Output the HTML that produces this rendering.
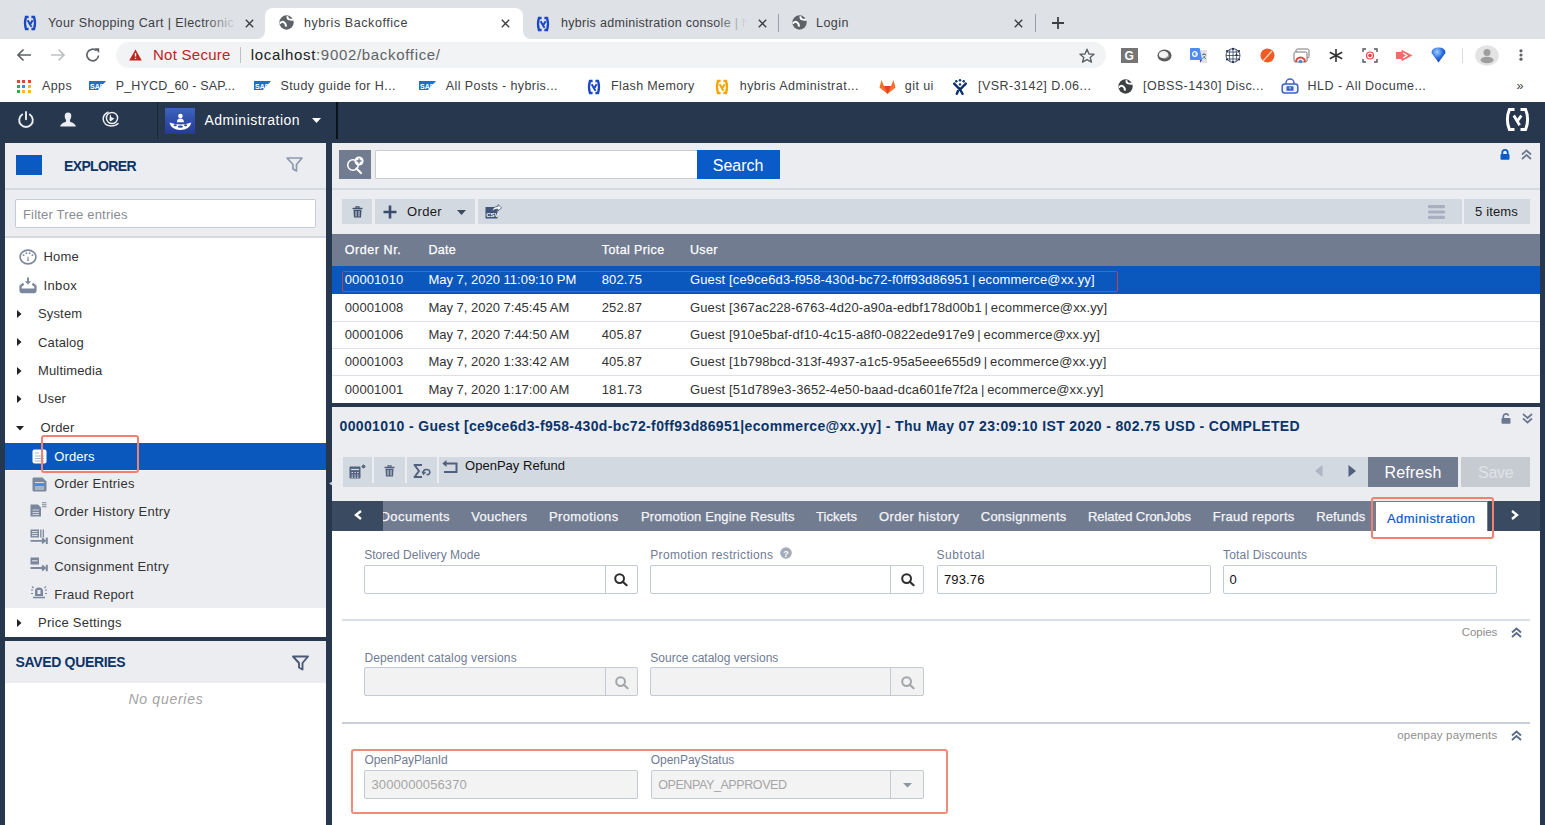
<!DOCTYPE html>
<html><head><meta charset="utf-8">
<style>
*{box-sizing:border-box;margin:0;padding:0}
html,body{width:1545px;height:825px;overflow:hidden;background:#27374d;font-family:"Liberation Sans",sans-serif;position:relative}
.a{position:absolute}
.t{position:absolute;white-space:nowrap;line-height:1;font-family:"Liberation Sans",sans-serif}
svg.a{overflow:visible}
</style></head><body>
<div class="a" style="left:0px;top:0px;width:1545px;height:39px;background:#dee1e6;"></div>
<div class="a" style="left:0px;top:39px;width:1545px;height:63px;background:#ffffff;"></div>
<div class="a" style="left:265px;top:8px;width:258px;height:31px;background:#ffffff;border-radius:8px 8px 0 0;"></div>
<svg class="a" style="left:257px;top:31px;" width="8" height="8" viewBox="0 0 8 8"><path d="M8 0 V8 H0 A8 8 0 0 0 8 0Z" fill="#fff"/></svg>
<svg class="a" style="left:523px;top:31px;" width="8" height="8" viewBox="0 0 8 8"><path d="M0 0 V8 H8 A8 8 0 0 1 0 0Z" fill="#fff"/></svg>
<div class="a" style="left:116px;top:42px;width:990px;height:26px;background:#f1f3f4;border-radius:13px;"></div>
<svg class="a" style="left:23px;top:16px;" width="14" height="14" viewBox="0 0 14 14"><path d="M5.6 1 H2.9 Q1.1 7 2.9 13 H5.6" stroke="#1a47c4" stroke-width="2.3" fill="none"/><path d="M8.4 1 H11.1 Q12.9 7 11.1 13 H8.4" stroke="#1a47c4" stroke-width="2.3" fill="none"/><path d="M4.7 4.3 L7.5 9.2 L8.6 10.8 M9.6 4.3 L7.1 8.4" stroke="#1a47c4" stroke-width="2" fill="none"/></svg>
<span class="t" style="left:48.0px;top:17.00px;font-size:12.50px;color:#3c4043;letter-spacing:0.40px;">Your Shopping Cart | Electronic</span>
<div class="a" style="left:205px;top:10px;width:40px;height:25px;background:linear-gradient(90deg,rgba(222,225,230,0),#dee1e6 80%);"></div>
<svg class="a" style="left:244.5px;top:18.5px;" width="9" height="9" viewBox="0 0 9 9"><path d="M0.8 0.8 L8.2 8.2 M8.2 0.8 L0.8 8.2" stroke="#3c4043" stroke-width="1.4"/></svg>
<svg class="a" style="left:279px;top:15px;" width="15" height="15" viewBox="0 0 15 15"><circle cx="7.5" cy="7.5" r="7.2" fill="#5f6368"/><path d="M0.8 8.6 Q2.8 5.6 5.2 7.4 Q7.6 9.4 6.6 11.6 M8.6 1.2 Q8 3.6 10.2 4.4 Q12.6 5 14.4 4.6" stroke="#fff" stroke-width="1.9" fill="none"/></svg>
<span class="t" style="left:304.0px;top:17.00px;font-size:12.50px;color:#3c4043;letter-spacing:0.57px;">hybris Backoffice</span>
<svg class="a" style="left:501.0px;top:18.5px;" width="9" height="9" viewBox="0 0 9 9"><path d="M0.8 0.8 L8.2 8.2 M8.2 0.8 L0.8 8.2" stroke="#3c4043" stroke-width="1.4"/></svg>
<svg class="a" style="left:536px;top:16.5px;" width="14" height="14" viewBox="0 0 14 14"><path d="M5.6 1 H2.9 Q1.1 7 2.9 13 H5.6" stroke="#1a47c4" stroke-width="2.3" fill="none"/><path d="M8.4 1 H11.1 Q12.9 7 11.1 13 H8.4" stroke="#1a47c4" stroke-width="2.3" fill="none"/><path d="M4.7 4.3 L7.5 9.2 L8.6 10.8 M9.6 4.3 L7.1 8.4" stroke="#1a47c4" stroke-width="2" fill="none"/></svg>
<div class="a" style="left:560px;top:10px;width:190px;height:26px;overflow:hidden"><span class="t" style="left:1.0px;top:7.00px;font-size:12.50px;color:#3c4043;letter-spacing:0.30px;">hybris administration console | hybris</span>
</div>
<div class="a" style="left:715px;top:10px;width:36px;height:26px;background:linear-gradient(90deg,rgba(222,225,230,0) 0,#dee1e6 90%);"></div>
<svg class="a" style="left:757.5px;top:18.5px;" width="9" height="9" viewBox="0 0 9 9"><path d="M0.8 0.8 L8.2 8.2 M8.2 0.8 L0.8 8.2" stroke="#3c4043" stroke-width="1.4"/></svg>
<div class="a" style="left:778px;top:14px;width:1px;height:18px;background:#9aa0a6;"></div>
<svg class="a" style="left:792px;top:15px;" width="15" height="15" viewBox="0 0 15 15"><circle cx="7.5" cy="7.5" r="7.2" fill="#5f6368"/><path d="M0.8 8.6 Q2.8 5.6 5.2 7.4 Q7.6 9.4 6.6 11.6 M8.6 1.2 Q8 3.6 10.2 4.4 Q12.6 5 14.4 4.6" stroke="#fff" stroke-width="1.9" fill="none"/></svg>
<span class="t" style="left:816.0px;top:17.00px;font-size:12.50px;color:#3c4043;letter-spacing:0.48px;">Login</span>
<svg class="a" style="left:1013.5px;top:18.5px;" width="9" height="9" viewBox="0 0 9 9"><path d="M0.8 0.8 L8.2 8.2 M8.2 0.8 L0.8 8.2" stroke="#3c4043" stroke-width="1.4"/></svg>
<div class="a" style="left:1035px;top:14px;width:1px;height:18px;background:#9aa0a6;"></div>
<svg class="a" style="left:1051px;top:16px;" width="14" height="14" viewBox="0 0 14 14"><path d="M7 1 V13 M1 7 H13" stroke="#3c4043" stroke-width="1.8"/></svg>
<svg class="a" style="left:16px;top:47px;" width="16" height="16" viewBox="0 0 16 16"><path d="M15 8 H2 M7.5 2.5 L2 8 L7.5 13.5" stroke="#5f6368" stroke-width="1.7" fill="none"/></svg>
<svg class="a" style="left:50px;top:47px;" width="16" height="16" viewBox="0 0 16 16"><path d="M1 8 H14 M8.5 2.5 L14 8 L8.5 13.5" stroke="#bdc1c6" stroke-width="1.7" fill="none"/></svg>
<svg class="a" style="left:85px;top:47px;" width="16" height="16" viewBox="0 0 16 16"><path d="M13.5 8.5 A5.8 5.8 0 1 1 11.5 3.6" stroke="#5f6368" stroke-width="1.7" fill="none"/><path d="M9.5 1.2 L14.2 1.2 L14.2 6 Z" fill="#5f6368"/></svg>
<svg class="a" style="left:129px;top:49px;" width="13" height="12" viewBox="0 0 13 12"><path d="M6.5 0.5 L12.8 11.5 H0.2 Z" fill="#c5221f"/><path d="M6.5 4 V7.6 M6.5 8.8 V10" stroke="#fff" stroke-width="1.4"/></svg>
<span class="t" style="left:153.0px;top:47.00px;font-size:15.00px;color:#c5221f;letter-spacing:0.27px;">Not Secure</span>
<div class="a" style="left:240px;top:47px;width:1px;height:16px;background:#bdc1c6;"></div>
<span class="t" style="left:250.7px;top:47.25px;font-size:15px;letter-spacing:0.68px;color:#202124">localhost<span style="color:#5f6368">:9002/backoffice/</span></span>
<svg class="a" style="left:1079px;top:48px;" width="16" height="15" viewBox="0 0 16 15"><path d="M8 1.2 L10 6 L15 6.3 L11.2 9.5 L12.5 14.2 L8 11.6 L3.5 14.2 L4.8 9.5 L1 6.3 L6 6 Z" stroke="#5f6368" stroke-width="1.4" fill="none" stroke-linejoin="round"/></svg>
<div class="a" style="left:1121px;top:48px;width:17px;height:15px;background:#757575;"></div>
<span class="t" style="left:1124.5px;top:50.00px;font-size:12.00px;color:#fff;font-weight:bold;">G</span>
<svg class="a" style="left:1156.5px;top:48.5px;" width="15" height="13" viewBox="0 0 15 13"><ellipse cx="7.5" cy="6.5" rx="7" ry="6" fill="#5a5a5a"/><ellipse cx="6.6" cy="5.7" rx="4.8" ry="3.6" fill="#f4f4f4"/><path d="M11 3.5 Q12.5 8.5 6 9.6 Q11 10.5 12.6 6.8Z" fill="#9a9a9a"/></svg>
<div class="a" style="left:1199.8px;top:50.4px;width:7.2px;height:12.3px;background:#e2e2e2;"></div>
<svg class="a" style="left:1189.8px;top:47.8px;" width="18" height="15" viewBox="0 0 18 15"><path d="M0.8 0 H9.6 L12.2 12 H0.8 Q0 12 0 11.2 V0.8 Q0 0 0.8 0Z" fill="#4c8bf5"/><path d="M9.8 12 L12.2 12 L10 14.6Z" fill="#3a3fb0"/><circle cx="4.9" cy="6" r="2.3" stroke="#fff" stroke-width="1.2" fill="none"/><path d="M5 6 H7.3" stroke="#fff" stroke-width="1"/><path d="M12 6.5 L16 6.5 M14 5 V7 M12.5 11 L15.5 7.5 M13.5 8.5 L16 11" stroke="#5a7a8a" stroke-width="0.9"/></svg>
<svg class="a" style="left:1225px;top:47.8px;" width="16" height="15" viewBox="0 0 16 15"><ellipse cx="8" cy="7.5" rx="7" ry="6.8" stroke="#1b2a4e" stroke-width="0.8" fill="none"/><path d="M1 7.5 H15 M8 0.7 V14.3 M2 4 H14 M2 11 H14 M5 1.3 Q3.5 7.5 5 13.7 M11 1.3 Q12.5 7.5 11 13.7" stroke="#1b2a4e" stroke-width="0.7" fill="none"/><circle cx="8" cy="0.9" r="1.1" fill="#1b2a4e"/><circle cx="8" cy="14.1" r="1.1" fill="#1b2a4e"/><circle cx="2" cy="3" r="1.1" fill="#1b2a4e"/><circle cx="14" cy="3" r="1.1" fill="#1b2a4e"/><circle cx="2" cy="11.5" r="1.1" fill="#1b2a4e"/><circle cx="14" cy="11.5" r="1.1" fill="#1b2a4e"/><circle cx="11.5" cy="7" r="1.1" fill="#1b2a4e"/></svg>
<svg class="a" style="left:1260px;top:48px;" width="15" height="15" viewBox="0 0 15 15"><circle cx="7.5" cy="7.5" r="7" fill="#ef5b25"/><path d="M3 13 L12 3" stroke="#fcd0b5" stroke-width="1.3"/></svg>
<svg class="a" style="left:1293px;top:48px;" width="17" height="15" viewBox="0 0 17 15"><rect x="3" y="1" width="13" height="9" rx="1.5" stroke="#777" fill="#fff"/><rect x="1" y="4" width="13" height="10" rx="1.5" stroke="#777" fill="#fff"/><path d="M3 14 A4.5 4.5 0 0 1 12 14" stroke="#e94235" stroke-width="2" fill="none"/><circle cx="7.5" cy="13.5" r="1.8" fill="#4285f4"/></svg>
<svg class="a" style="left:1329px;top:49px;" width="14" height="13" viewBox="0 0 14 13"><path d="M7 0 V13 M0.8 3.3 L13.2 9.7 M13.2 3.3 L0.8 9.7" stroke="#333" stroke-width="1.6"/></svg>
<svg class="a" style="left:1362px;top:48px;" width="16" height="15" viewBox="0 0 16 15"><path d="M1 4 V1 H4 M12 1 H15 V4 M15 11 V14 H12 M4 14 H1 V11" stroke="#555" stroke-width="1.4" fill="none"/><circle cx="8" cy="7.5" r="3.5" stroke="#e94235" stroke-width="1.2" fill="none"/><circle cx="8" cy="7.5" r="1.8" fill="#e94235"/></svg>
<svg class="a" style="left:1396px;top:49px;" width="17" height="13" viewBox="0 0 17 13"><path d="M0 3 H5 L6 1 L16.5 6.5 L6 12 L5 10 H0 Z" fill="#f26b6b"/><path d="M7 4 L11 6.5 L7 9" stroke="#fff" stroke-width="1.2" fill="none"/></svg>
<svg class="a" style="left:1431px;top:47px;" width="15" height="16" viewBox="0 0 15 16"><defs><radialGradient id="gm" cx="0.4" cy="0.3" r="0.8"><stop offset="0" stop-color="#9fd3ff"/><stop offset="0.5" stop-color="#2c6de0"/><stop offset="1" stop-color="#0b2fa0"/></radialGradient></defs><path d="M7.5 15.5 L0.5 6 Q0.5 0.5 7.5 0.5 Q14.5 0.5 14.5 6 Z" fill="url(#gm)"/></svg>
<div class="a" style="left:1462px;top:48px;width:1px;height:15px;background:#dadce0;"></div>
<svg class="a" style="left:1475px;top:45px;" width="24" height="21" viewBox="0 0 24 21"><ellipse cx="12" cy="10.5" rx="11.8" ry="10.3" fill="#e3e3e3"/><circle cx="12" cy="7.5" r="3.5" fill="#9e9e9e"/><ellipse cx="12" cy="15" rx="6.5" ry="3.2" fill="#9e9e9e"/></svg>
<svg class="a" style="left:1519px;top:49px;" width="4" height="12" viewBox="0 0 4 12"><circle cx="2" cy="1.8" r="1.6" fill="#5f6368"/><circle cx="2" cy="6" r="1.6" fill="#5f6368"/><circle cx="2" cy="10.2" r="1.6" fill="#5f6368"/></svg>
<svg class="a" style="left:17px;top:80px;" width="15" height="13" viewBox="0 0 15 13"><rect x="0" y="0" width="3" height="3" fill="#ea4335"/><rect x="5" y="0" width="3" height="3" fill="#ea4335"/><rect x="11" y="0" width="3" height="3" fill="#ea4335"/><rect x="0" y="5" width="3" height="3" fill="#34a853"/><rect x="5" y="5" width="3" height="3" fill="#4285f4"/><rect x="11" y="5" width="3" height="3" fill="#fbbc04"/><rect x="0" y="10" width="3" height="3" fill="#34a853"/><rect x="5" y="10" width="3" height="3" fill="#fbbc04"/><rect x="11" y="10" width="3" height="3" fill="#fbbc04"/></svg>
<span class="t" style="left:42.0px;top:80.00px;font-size:12.50px;color:#3c4043;letter-spacing:0.38px;">Apps</span>
<svg class="a" style="left:89px;top:81px;" width="17" height="9" viewBox="0 0 17 9"><path d="M0 0 H17 L9 9 H0 Z" fill="#1a73c8"/><text x="1" y="7.5" font-size="7" font-weight="bold" fill="#fff" font-family="Liberation Sans">SAP</text></svg>
<span class="t" style="left:115.7px;top:80.00px;font-size:12.50px;color:#3c4043;letter-spacing:0.16px;">P_HYCD_60 - SAP...</span>
<svg class="a" style="left:254px;top:81px;" width="17" height="9" viewBox="0 0 17 9"><path d="M0 0 H17 L9 9 H0 Z" fill="#1a73c8"/><text x="1" y="7.5" font-size="7" font-weight="bold" fill="#fff" font-family="Liberation Sans">SAP</text></svg>
<span class="t" style="left:280.4px;top:80.00px;font-size:12.50px;color:#3c4043;letter-spacing:0.43px;">Study guide for H...</span>
<svg class="a" style="left:419px;top:81px;" width="17" height="9" viewBox="0 0 17 9"><path d="M0 0 H17 L9 9 H0 Z" fill="#1a73c8"/><text x="1" y="7.5" font-size="7" font-weight="bold" fill="#fff" font-family="Liberation Sans">SAP</text></svg>
<span class="t" style="left:445.8px;top:80.00px;font-size:12.50px;color:#3c4043;letter-spacing:0.41px;">All Posts - hybris...</span>
<svg class="a" style="left:587px;top:80px;" width="14" height="14" viewBox="0 0 14 14"><path d="M5.6 1 H2.9 Q1.1 7 2.9 13 H5.6" stroke="#1a47c4" stroke-width="2.3" fill="none"/><path d="M8.4 1 H11.1 Q12.9 7 11.1 13 H8.4" stroke="#1a47c4" stroke-width="2.3" fill="none"/><path d="M4.7 4.3 L7.5 9.2 L8.6 10.8 M9.6 4.3 L7.1 8.4" stroke="#1a47c4" stroke-width="2" fill="none"/></svg>
<span class="t" style="left:611.0px;top:80.00px;font-size:12.50px;color:#3c4043;letter-spacing:0.38px;">Flash Memory</span>
<svg class="a" style="left:715px;top:80px;" width="14" height="14" viewBox="0 0 14 14"><path d="M5.6 1 H2.9 Q1.1 7 2.9 13 H5.6" stroke="#f5a400" stroke-width="2.3" fill="none"/><path d="M8.4 1 H11.1 Q12.9 7 11.1 13 H8.4" stroke="#f5a400" stroke-width="2.3" fill="none"/><path d="M4.7 4.3 L7.5 9.2 L8.6 10.8 M9.6 4.3 L7.1 8.4" stroke="#f5a400" stroke-width="2" fill="none"/></svg>
<span class="t" style="left:739.7px;top:80.00px;font-size:12.50px;color:#3c4043;letter-spacing:0.49px;">hybris Administrat...</span>
<svg class="a" style="left:879px;top:79px;" width="17" height="15" viewBox="0 0 17 15"><path d="M8.5 15 L0.5 8.5 L2.5 1 L5 7 H12 L14.5 1 L16.5 8.5 Z" fill="#fc6d26"/><path d="M8.5 15 L5 7 H12 Z" fill="#e24329"/></svg>
<span class="t" style="left:904.8px;top:80.00px;font-size:12.50px;color:#3c4043;letter-spacing:0.43px;">git ui</span>
<svg class="a" style="left:953px;top:78.5px;" width="14" height="16" viewBox="0 0 14 16"><circle cx="3.3" cy="2.3" r="1.2" fill="#0a2f6b"/><circle cx="7" cy="1.3" r="1.2" fill="#0a2f6b"/><circle cx="10.7" cy="2.3" r="1.2" fill="#0a2f6b"/><circle cx="7" cy="5.4" r="1.2" fill="#0a2f6b"/><path d="M1.2 4.6 L7 10.6 L12.8 4.6" stroke="#0a2f6b" stroke-width="2.4" fill="none" stroke-linecap="round"/><path d="M6.4 9.5 L9.6 14.8 M5 12 L3.8 14.8" stroke="#0a2f6b" stroke-width="2.4" stroke-linecap="round"/></svg>
<span class="t" style="left:978.0px;top:80.00px;font-size:12.50px;color:#3c4043;letter-spacing:0.47px;">[VSR-3142] D.06...</span>
<svg class="a" style="left:1118px;top:79px;" width="15" height="15" viewBox="0 0 15 15"><circle cx="7.5" cy="7.5" r="7.2" fill="#3c4043"/><path d="M0.8 8.6 Q2.8 5.6 5.2 7.4 Q7.6 9.4 6.6 11.6 M8.6 1.2 Q8 3.6 10.2 4.4 Q12.6 5 14.4 4.6" stroke="#fff" stroke-width="1.9" fill="none"/></svg>
<span class="t" style="left:1143.0px;top:80.00px;font-size:12.50px;color:#3c4043;letter-spacing:0.48px;">[OBSS-1430] Disc...</span>
<svg class="a" style="left:1281px;top:78px;" width="18" height="16" viewBox="0 0 18 16"><path d="M5 6 V5 A4 4 0 0 1 13 5 V6" stroke="#3b62c9" stroke-width="1.5" fill="none"/><rect x="1.2" y="6" width="15.6" height="9" rx="2.5" stroke="#3b62c9" stroke-width="1.5" fill="#eef2fb"/><rect x="5.5" y="8.2" width="7" height="4.6" rx="0.6" fill="#3b62c9"/><path d="M8 9.6 H10 L9 11.2Z" fill="#fff"/></svg>
<span class="t" style="left:1307.6px;top:80.00px;font-size:12.50px;color:#3c4043;letter-spacing:0.47px;">HLD - All Docume...</span>
<span class="t" style="left:1516.6px;top:80.00px;font-size:12.50px;color:#3c4043;">»</span>
<div class="a" style="left:0px;top:102px;width:1545px;height:41px;background:#27374d;"></div>
<svg class="a" style="left:17px;top:111px;" width="18" height="17" viewBox="0 0 18 17"><path d="M5.2 3.5 A6.8 6.8 0 1 0 12.8 3.5" stroke="#ebedf0" stroke-width="1.9" fill="none" stroke-linecap="round"/><path d="M9 1 V8.2" stroke="#ebedf0" stroke-width="1.9" stroke-linecap="round"/></svg>
<svg class="a" style="left:60px;top:112px;" width="16" height="15" viewBox="0 0 16 15"><path d="M8 0.5 Q11.5 0.5 11.3 4 Q11.2 6.5 10 8 Q9.5 9.2 10.5 10 Q15.5 11.5 15.8 14.5 H0.2 Q0.5 11.5 5.5 10 Q6.5 9.2 6 8 Q4.6 6.5 4.7 4 Q4.7 0.5 8 0.5Z" fill="#ebedf0"/></svg>
<svg class="a" style="left:102px;top:111px;" width="18" height="16" viewBox="0 0 18 16"><path d="M6 1.2 Q0.8 3.5 1.2 8.5 Q2 14.5 9 15 Q13.5 15 16 12.5" stroke="#ebedf0" stroke-width="1.5" fill="none" stroke-linecap="round"/><circle cx="10" cy="7" r="5.6" stroke="#ebedf0" stroke-width="1.5" fill="none"/><path d="M8 3.5 Q10 4.5 9 6 L12.5 7.5 L8.5 10.5 Q7 9 7.5 7.5Z" fill="#ebedf0"/></svg>
<div class="a" style="left:157px;top:102px;width:1px;height:37px;background:#1b2636;"></div>
<div class="a" style="left:165px;top:108px;width:30px;height:26px;background:linear-gradient(180deg,#3b64bb,#26399a);"></div>
<svg class="a" style="left:165px;top:108px;" width="30" height="26" viewBox="0 0 30 26"><circle cx="15.4" cy="8" r="2.3" fill="#fff"/><path d="M11.9 14.3 Q11.9 10.6 15.4 10.6 Q18.9 10.6 18.9 14.3Z" fill="#fff"/><path d="M4.4 14.6 Q15.4 18.6 26.4 14.6 Q24.5 22 15.4 22 Q6.3 22 4.4 14.6Z" fill="#fff"/><ellipse cx="10.2" cy="17.2" rx="1.6" ry="1" fill="#2d47a6"/><ellipse cx="15.4" cy="18.7" rx="2.6" ry="1.1" fill="#2d47a6"/><ellipse cx="20.6" cy="17.2" rx="1.6" ry="1" fill="#2d47a6"/></svg>
<span class="t" style="left:204.5px;top:113.00px;font-size:14.00px;color:#ffffff;letter-spacing:0.49px;">Administration</span>
<svg class="a" style="left:312px;top:118px;" width="9" height="5" viewBox="0 0 9 5"><path d="M0 0 H9 L4.5 5Z" fill="#fff"/></svg>
<div class="a" style="left:336px;top:102px;width:1.5px;height:37px;background:#0c121b;"></div>
<svg class="a" style="left:1505px;top:108px;" width="25" height="23" viewBox="0 0 25 23"><path d="M9.5 1.6 H4.4 Q2.4 6 2.4 11.5 Q2.4 17 4.4 21.4 H9.5" stroke="#fff" stroke-width="3" fill="none"/><path d="M15.5 1.6 H20.6 Q22.6 6 22.6 11.5 Q22.6 17 20.6 21.4 H15.5" stroke="#fff" stroke-width="3" fill="none"/><path d="M8.8 7.6 L13.2 14.8 L14.6 17.2" stroke="#fff" stroke-width="2.8" fill="none"/><path d="M16.4 7.6 L12.2 13.2" stroke="#fff" stroke-width="2.8" fill="none"/></svg>
<div class="a" style="left:5px;top:143px;width:321px;height:682px;background:#ffffff;"></div>
<div class="a" style="left:5px;top:143px;width:321px;height:46px;background:#ebedf0;"></div>
<div class="a" style="left:5px;top:188px;width:321px;height:2px;background:#d5dae1;"></div>
<div class="a" style="left:5px;top:190px;width:321px;height:47px;background:#ebedf0;"></div>
<div class="a" style="left:5px;top:236px;width:321px;height:2px;background:#d5dae1;"></div>
<div class="a" style="left:16px;top:155px;width:26px;height:20px;background:#0a5ac4;"></div>
<span class="t" style="left:64.0px;top:159.00px;font-size:14.00px;color:#0b3468;letter-spacing:-0.63px;font-weight:bold;">EXPLORER</span>
<svg class="a" style="left:286px;top:157px;" width="17" height="15" viewBox="0 0 17 15"><path d="M1 1 H16 L10.5 7.5 V14 L7 12 V7.5 Z" stroke="#8d99ad" stroke-width="1.7" fill="none" stroke-linejoin="round"/></svg>
<div class="a" style="left:15px;top:199px;width:301px;height:29px;background:#ffffff;border:1px solid #c5ccd6;border-radius:2px;"></div>
<span class="t" style="left:23.0px;top:208.00px;font-size:13.00px;color:#888d93;letter-spacing:0.18px;">Filter Tree entries</span>
<svg class="a" style="left:19px;top:249px;" width="18" height="16" viewBox="0 0 18 16"><ellipse cx="9" cy="8" rx="7.9" ry="6.9" stroke="#7b879c" stroke-width="1.6" fill="none"/><path d="M8.2 12 L8.6 7.5 H9.4 L9.8 12Z" fill="#7b879c"/><circle cx="4.6" cy="6.2" r="0.9" fill="#7b879c"/><circle cx="7.4" cy="4.2" r="0.9" fill="#7b879c"/><circle cx="10.6" cy="4.2" r="0.9" fill="#7b879c"/><circle cx="13.4" cy="6.2" r="0.9" fill="#7b879c"/></svg>
<span class="t" style="left:43.6px;top:250.00px;font-size:13.00px;color:#333333;letter-spacing:0.13px;">Home</span>
<svg class="a" style="left:19px;top:277px;" width="18" height="16" viewBox="0 0 18 16"><path d="M9 0.5 V5" stroke="#7b879c" stroke-width="1.9"/><path d="M5.8 4.2 L9 7.4 L12.2 4.2Z" fill="#7b879c"/><path d="M4.6 6.6 L1.6 9.2 V13.2 Q1.6 15 3.4 15 H14.6 Q16.4 15 16.4 13.2 V9.2 L13.4 6.6" stroke="#7b879c" stroke-width="2.4" fill="none" stroke-linejoin="round"/><rect x="1.6" y="11.5" width="14.8" height="3.5" fill="#7b879c"/></svg>
<span class="t" style="left:43.6px;top:279.00px;font-size:13.00px;color:#333333;letter-spacing:0.34px;">Inbox</span>
<svg class="a" style="left:16.5px;top:309.5px;" width="5" height="8" viewBox="0 0 5 8"><path d="M0 0 L4.5 4 L0 8Z" fill="#222"/></svg>
<span class="t" style="left:38.0px;top:307.00px;font-size:13.00px;color:#333333;letter-spacing:0.15px;">System</span>
<svg class="a" style="left:16.5px;top:338.1px;" width="5" height="8" viewBox="0 0 5 8"><path d="M0 0 L4.5 4 L0 8Z" fill="#222"/></svg>
<span class="t" style="left:38.0px;top:336.00px;font-size:13.00px;color:#333333;letter-spacing:0.15px;">Catalog</span>
<svg class="a" style="left:16.5px;top:366.5px;" width="5" height="8" viewBox="0 0 5 8"><path d="M0 0 L4.5 4 L0 8Z" fill="#222"/></svg>
<span class="t" style="left:38.0px;top:364.00px;font-size:13.00px;color:#333333;letter-spacing:0.15px;">Multimedia</span>
<svg class="a" style="left:16.5px;top:394.8px;" width="5" height="8" viewBox="0 0 5 8"><path d="M0 0 L4.5 4 L0 8Z" fill="#222"/></svg>
<span class="t" style="left:38.0px;top:392.00px;font-size:13.00px;color:#333333;letter-spacing:0.15px;">User</span>
<svg class="a" style="left:16px;top:426px;" width="8" height="5" viewBox="0 0 8 5"><path d="M0 0 H8 L4 4.5Z" fill="#222"/></svg>
<span class="t" style="left:40.5px;top:421.00px;font-size:13.00px;color:#333333;letter-spacing:0.15px;">Order</span>
<div class="a" style="left:5px;top:443px;width:321px;height:27px;background:#0a58bd;"></div>
<svg class="a" style="left:32px;top:449px;" width="15" height="15" viewBox="0 0 15 15"><rect x="0.5" y="0.5" width="14" height="14" rx="2" fill="#fff"/><path d="M3 4 H7 M3 7 H12 M3 9.5 H12 M3 12 H12" stroke="#a8b7cf" stroke-width="1.2"/></svg>
<span class="t" style="left:54.2px;top:450.00px;font-size:13.00px;color:#ffffff;letter-spacing:0.13px;">Orders</span>
<div class="a" style="left:5px;top:470px;width:321px;height:138px;background:#ebedf0;"></div>
<div class="a" style="left:5px;top:470px;width:321px;height:1px;background:#f4f5f7;"></div>
<svg class="a" style="left:328.5px;top:481px;" width="4" height="5" viewBox="0 0 4 5"><path d="M4 0 V5 L0 2.5Z" fill="#c9ccd1"/></svg>
<div class="a" style="left:41px;top:435px;width:98px;height:38px;border:2px solid #f2806f;border-radius:3px;"></div>
<svg class="a" style="left:32px;top:477px;" width="15" height="15" viewBox="0 0 15 15"><path d="M1.5 0.5 H10.5 L14.5 4.5 V13 Q14.5 14.5 13 14.5 H2 Q0.5 14.5 0.5 13 V2 Q0.5 0.5 1.5 0.5Z" fill="#7b879c"/><path d="M3 5.5 H12 M3 10 H12 M3 12 H12" stroke="#d9dee6" stroke-width="1"/><rect x="2.5" y="7" width="10" height="1.8" fill="#3a8ef0"/></svg>
<span class="t" style="left:54.2px;top:477.00px;font-size:13.00px;color:#333333;letter-spacing:0.25px;">Order Entries</span>
<svg class="a" style="left:30px;top:502px;" width="17" height="15" viewBox="0 0 17 15"><path d="M0.5 2.5 H8 L11 5.5 V14.5 H0.5Z" fill="#7b879c"/><path d="M2.5 8 H9 M2.5 10.5 H9 M2.5 12.5 H9" stroke="#d9dee6" stroke-width="0.9"/><path d="M12 0.8 H16.5 M12 2.8 H16.5 M12 4.8 H16.5" stroke="#7b879c" stroke-width="1.1"/></svg>
<span class="t" style="left:54.2px;top:505.00px;font-size:13.00px;color:#333333;letter-spacing:0.25px;">Order History Entry</span>
<svg class="a" style="left:30px;top:529px;" width="18" height="16" viewBox="0 0 18 16"><rect x="0.5" y="0.5" width="8.5" height="8" fill="#7b879c"/><path d="M2 2.6 H7.5 M2 4.6 H7.5 M2 6.6 H7.5" stroke="#ebedf0" stroke-width="0.9"/><path d="M10.8 0.5 V8.5 M13.3 0.5 V8.5" stroke="#7b879c" stroke-width="1.3"/><path d="M0.5 11.8 H15 M12 9.3 L15 11.8 L12 14.3" stroke="#7b879c" stroke-width="1.8" fill="none"/><path d="M16.8 8.6 V15" stroke="#7b879c" stroke-width="2"/></svg>
<span class="t" style="left:54.2px;top:533.00px;font-size:13.00px;color:#333333;letter-spacing:0.25px;">Consignment</span>
<svg class="a" style="left:30px;top:557px;" width="18" height="15" viewBox="0 0 18 15"><rect x="0.5" y="0.5" width="8.5" height="7" fill="#7b879c"/><path d="M2 3.8 H7.5" stroke="#ebedf0" stroke-width="1"/><path d="M0.5 11 H15 M12 8.5 L15 11 L12 13.5" stroke="#7b879c" stroke-width="1.8" fill="none"/><path d="M16.8 7.8 V14.2" stroke="#7b879c" stroke-width="2"/></svg>
<span class="t" style="left:54.2px;top:560.00px;font-size:13.00px;color:#333333;letter-spacing:0.25px;">Consignment Entry</span>
<svg class="a" style="left:30px;top:585px;" width="18" height="14" viewBox="0 0 18 14"><path d="M5 11 V6 Q5 2.5 9 2.5 Q13 2.5 13 6 V11Z" fill="#7b879c"/><rect x="7.5" y="5" width="3" height="4" fill="#ebedf0"/><path d="M3 12.5 H15" stroke="#7b879c" stroke-width="1.5"/><path d="M1 5 H3 M15 5 H17 M2 1.5 L3.5 3 M16 1.5 L14.5 3 M1 8.5 H3 M15 8.5 H17" stroke="#7b879c" stroke-width="1.1"/></svg>
<span class="t" style="left:54.2px;top:588.00px;font-size:13.00px;color:#333333;letter-spacing:0.25px;">Fraud Report</span>
<svg class="a" style="left:16.5px;top:618.5px;" width="5" height="8" viewBox="0 0 5 8"><path d="M0 0 L4.5 4 L0 8Z" fill="#222"/></svg>
<span class="t" style="left:38.0px;top:616.00px;font-size:13.00px;color:#333333;letter-spacing:0.25px;">Price Settings</span>
<div class="a" style="left:5px;top:637px;width:321px;height:4px;background:#27374d;"></div>
<svg class="a" style="left:161px;top:641px;" width="8" height="4" viewBox="0 0 8 4"><path d="M0 0 H8 L4 4Z" fill="#b0b8c4"/></svg>
<div class="a" style="left:5px;top:641px;width:321px;height:42px;background:#ebedf0;"></div>
<span class="t" style="left:15.4px;top:655.00px;font-size:14.00px;color:#0b3468;letter-spacing:-0.32px;font-weight:bold;">SAVED QUERIES</span>
<svg class="a" style="left:292px;top:655px;" width="17" height="16" viewBox="0 0 17 15"><path d="M1 1 H16 L10.5 7.5 V14 L7 12 V7.5 Z" stroke="#4a5a78" stroke-width="1.9" fill="none" stroke-linejoin="round"/></svg>
<span class="t" style="left:128.4px;top:692.00px;font-size:14.00px;color:#a3a3a3;letter-spacing:0.73px;font-style:italic;">No queries</span>
<div class="a" style="left:332px;top:143px;width:1208px;height:264px;background:#ebedf0;"></div>
<div class="a" style="left:339px;top:150px;width:32px;height:29px;background:#717c91;"></div>
<svg class="a" style="left:345px;top:155px;" width="22" height="20" viewBox="0 0 22 20"><circle cx="8" cy="10" r="5.3" stroke="#fff" stroke-width="1.6" fill="none"/><path d="M11.5 13.5 L16 18" stroke="#fff" stroke-width="2.2" stroke-linecap="round"/><circle cx="14" cy="6" r="4.6" fill="#fff"/><path d="M14 3.5 V8.5 M11.5 6 H16.5" stroke="#717c91" stroke-width="1.4"/></svg>
<div class="a" style="left:375px;top:150px;width:322px;height:29px;background:#ffffff;border:1px solid #c8ced8;border-right:none;border-radius:2px 0 0 2px;"></div>
<div class="a" style="left:696.6px;top:150px;width:83.4px;height:29px;background:#0a5ac8;"></div>
<span class="t" style="left:712.7px;top:158.00px;font-size:16.00px;color:#ffffff;letter-spacing:0.02px;">Search</span>
<div class="a" style="left:332px;top:188px;width:1208px;height:2px;background:#d5dae1;"></div>
<svg class="a" style="left:1500px;top:149px;" width="10" height="11" viewBox="0 0 10 11"><path d="M2.3 5 V3.6 A2.7 2.7 0 0 1 7.7 3.6 V5" stroke="#0a5ac8" stroke-width="1.8" fill="none"/><rect x="0.5" y="5" width="9" height="5.8" rx="1" fill="#0a5ac8"/></svg>
<svg class="a" style="left:1521px;top:149px;" width="11" height="11" viewBox="0 0 11 11"><path d="M1 5.5 L5.5 1.5 L10 5.5 M1 10 L5.5 6 L10 10" stroke="#6a7891" stroke-width="1.7" fill="none"/></svg>
<div class="a" style="left:342px;top:199px;width:30px;height:25px;background:#d3d9e1;"></div>
<svg class="a" style="left:351.5px;top:206px;" width="11" height="12" viewBox="0 0 11 12"><path d="M0.5 2.5 H10.5" stroke="#41536f" stroke-width="1.4"/><path d="M4 2 V0.8 H7 V2" stroke="#41536f" stroke-width="1.2" fill="none"/><path d="M1.5 3.8 H9.5 L9 11.5 H2 Z" fill="#41536f"/><path d="M4 5 V10.5 M7 5 V10.5" stroke="#d3d9e1" stroke-width="1"/></svg>
<div class="a" style="left:375px;top:199px;width:100px;height:25px;background:#d3d9e1;"></div>
<svg class="a" style="left:383px;top:205px;" width="14" height="14" viewBox="0 0 14 14"><path d="M7 0.5 V13.5 M0.5 7 H13.5" stroke="#3a4c6e" stroke-width="2.6"/></svg>
<span class="t" style="left:407.0px;top:205.00px;font-size:13.00px;color:#1a1a1a;letter-spacing:0.35px;">Order</span>
<svg class="a" style="left:457px;top:210px;" width="9" height="5" viewBox="0 0 9 5"><path d="M0 0 H9 L4.5 5Z" fill="#3d4a5c"/></svg>
<div class="a" style="left:478px;top:199px;width:984px;height:25px;background:#d3d9e1;"></div>
<svg class="a" style="left:485px;top:204px;" width="17" height="15" viewBox="0 0 17 15"><rect x="0.5" y="3" width="12" height="11.5" fill="#3f5478"/><text x="1.2" y="12.5" font-size="6" font-weight="bold" fill="#fff" font-family="Liberation Sans">CSV</text><path d="M7 7 Q8 2.5 13 2.5 V0.5 L16.5 3.8 L13 7 V5 Q9.5 5 7 7Z" fill="#fff" stroke="#3f5478" stroke-width="0.8"/></svg>
<svg class="a" style="left:1428px;top:205px;" width="17" height="14" viewBox="0 0 17 14"><rect x="0" y="0" width="17" height="3.2" rx="1" fill="#a8b0bf"/><rect x="0" y="5.4" width="17" height="3.2" rx="1" fill="#a8b0bf"/><rect x="0" y="10.8" width="17" height="3.2" rx="1" fill="#a8b0bf"/></svg>
<div class="a" style="left:1464px;top:199px;width:66px;height:25px;background:#d3d9e1;"></div>
<span class="t" style="left:1475.0px;top:205.00px;font-size:13.00px;color:#1a1a1a;letter-spacing:0.16px;">5 items</span>
<div class="a" style="left:332px;top:234px;width:1208px;height:32px;background:#717c91;"></div>
<span class="t" style="left:344.8px;top:244.00px;font-size:12.50px;color:#ffffff;letter-spacing:0.56px;-webkit-text-stroke:0.25px #fff;">Order Nr.</span>
<span class="t" style="left:428.4px;top:244.00px;font-size:12.50px;color:#ffffff;letter-spacing:0.30px;-webkit-text-stroke:0.25px #fff;">Date</span>
<span class="t" style="left:601.8px;top:244.00px;font-size:12.50px;color:#ffffff;letter-spacing:0.40px;-webkit-text-stroke:0.25px #fff;">Total Price</span>
<span class="t" style="left:690.0px;top:244.00px;font-size:12.50px;color:#ffffff;letter-spacing:0.30px;-webkit-text-stroke:0.25px #fff;">User</span>
<div class="a" style="left:332px;top:266px;width:1208px;height:137px;background:#ffffff;"></div>
<div class="a" style="left:332px;top:266px;width:1208px;height:28px;background:#0a58bd;"></div>
<span class="t" style="left:344.8px;top:273.00px;font-size:13.00px;color:#ffffff;letter-spacing:0.08px;">00001010</span>
<span class="t" style="left:428.4px;top:273.00px;font-size:13.00px;color:#ffffff;">May 7, 2020 11:09:10 PM</span>
<span class="t" style="left:601.8px;top:273.00px;font-size:13.00px;color:#ffffff;letter-spacing:0.07px;">802.75</span>
<span class="t" style="left:690.0px;top:273.00px;font-size:13.00px;color:#ffffff;letter-spacing:0.13px;">Guest [ce9ce6d3-f958-430d-bc72-f0ff93d86951 | ecommerce@xx.yy]</span>
<span class="t" style="left:344.8px;top:301.00px;font-size:13.00px;color:#333333;letter-spacing:0.08px;">00001008</span>
<span class="t" style="left:428.4px;top:301.00px;font-size:13.00px;color:#333333;">May 7, 2020 7:45:45 AM</span>
<span class="t" style="left:601.8px;top:301.00px;font-size:13.00px;color:#333333;letter-spacing:0.07px;">252.87</span>
<span class="t" style="left:690.0px;top:301.00px;font-size:13.00px;color:#333333;letter-spacing:0.13px;">Guest [367ac228-6763-4d20-a90a-edbf178d00b1 | ecommerce@xx.yy]</span>
<div class="a" style="left:332px;top:321px;width:1208px;height:1px;background:#dde1e7;"></div>
<span class="t" style="left:344.8px;top:328.00px;font-size:13.00px;color:#333333;letter-spacing:0.08px;">00001006</span>
<span class="t" style="left:428.4px;top:328.00px;font-size:13.00px;color:#333333;">May 7, 2020 7:44:50 AM</span>
<span class="t" style="left:601.8px;top:328.00px;font-size:13.00px;color:#333333;letter-spacing:0.07px;">405.87</span>
<span class="t" style="left:690.0px;top:328.00px;font-size:13.00px;color:#333333;letter-spacing:0.13px;">Guest [910e5baf-df10-4c15-a8f0-0822ede917e9 | ecommerce@xx.yy]</span>
<div class="a" style="left:332px;top:348px;width:1208px;height:1px;background:#dde1e7;"></div>
<span class="t" style="left:344.8px;top:355.00px;font-size:13.00px;color:#333333;letter-spacing:0.08px;">00001003</span>
<span class="t" style="left:428.4px;top:355.00px;font-size:13.00px;color:#333333;">May 7, 2020 1:33:42 AM</span>
<span class="t" style="left:601.8px;top:355.00px;font-size:13.00px;color:#333333;letter-spacing:0.07px;">405.87</span>
<span class="t" style="left:690.0px;top:355.00px;font-size:13.00px;color:#333333;letter-spacing:0.13px;">Guest [1b798bcd-313f-4937-a1c5-95a5eee655d9 | ecommerce@xx.yy]</span>
<div class="a" style="left:332px;top:375px;width:1208px;height:1px;background:#dde1e7;"></div>
<span class="t" style="left:344.8px;top:383.00px;font-size:13.00px;color:#333333;letter-spacing:0.08px;">00001001</span>
<span class="t" style="left:428.4px;top:383.00px;font-size:13.00px;color:#333333;">May 7, 2020 1:17:00 AM</span>
<span class="t" style="left:601.8px;top:383.00px;font-size:13.00px;color:#333333;letter-spacing:0.07px;">181.73</span>
<span class="t" style="left:690.0px;top:383.00px;font-size:13.00px;color:#333333;letter-spacing:0.13px;">Guest [51d789e3-3652-4e50-baad-dca601fe7f2a | ecommerce@xx.yy]</span>
<div class="a" style="left:332px;top:403px;width:1208px;height:1px;background:#dde1e7;"></div>
<div class="a" style="left:341.5px;top:271px;width:776px;height:20.5px;border:1.5px solid #c23f52;border-radius:2px;"></div>
<div class="a" style="left:332px;top:403px;width:1208px;height:4px;background:#27374d;"></div>
<div class="a" style="left:332px;top:407px;width:1208px;height:94px;background:#ebedf0;"></div>
<span class="t" style="left:339.5px;top:419.00px;font-size:14.00px;color:#0b3468;letter-spacing:0.36px;font-weight:bold;">00001010 - Guest [ce9ce6d3-f958-430d-bc72-f0ff93d86951|ecommerce@xx.yy] - Thu May 07 23:09:10 IST 2020 - 802.75 USD - COMPLETED</span>
<svg class="a" style="left:1501px;top:413px;" width="10" height="11" viewBox="0 0 10 11"><path d="M2.3 5 V3.3 A2.7 2.7 0 0 1 7.5 2.6" stroke="#6a7891" stroke-width="1.7" fill="none"/><rect x="0.5" y="5" width="9" height="5.8" rx="1" fill="#6a7891"/></svg>
<svg class="a" style="left:1521.5px;top:413px;" width="11" height="11" viewBox="0 0 11 11"><path d="M1 1 L5.5 5 L10 1 M1 5.5 L5.5 9.5 L10 5.5" stroke="#6a7891" stroke-width="1.7" fill="none"/></svg>
<div class="a" style="left:342.5px;top:457px;width:1025.5px;height:29.5px;background:#d3d9e1;"></div>
<div class="a" style="left:372.2px;top:457px;width:2.3px;height:26px;background:#ebedf0;"></div>
<div class="a" style="left:404.6px;top:457px;width:2.3px;height:26px;background:#ebedf0;"></div>
<div class="a" style="left:437px;top:457px;width:2.3px;height:26px;background:#ebedf0;"></div>
<svg class="a" style="left:348.5px;top:463.5px;" width="18" height="15" viewBox="0 0 18 15"><rect x="0.5" y="2.5" width="11" height="12" rx="1" fill="#50607e"/><path d="M2 5.5 H10" stroke="#d3d9e1" stroke-width="1.3"/><path d="M2.5 8.5 H4 M5.3 8.5 H6.8 M8 8.5 H9.5 M2.5 11 H4 M5.3 11 H6.8 M8 11 H9.5 M2.5 13.2 H4 M5.3 13.2 H6.8 M8 13.2 H9.5" stroke="#d3d9e1" stroke-width="1.2"/><path d="M14.5 0.5 V4.5 M12.5 2.5 H16.5 M13 1 L16 4 M16 1 L13 4" stroke="#50607e" stroke-width="0.9"/></svg>
<svg class="a" style="left:384px;top:464.5px;" width="11" height="12" viewBox="0 0 11 12"><path d="M0.5 2.5 H10.5" stroke="#50607e" stroke-width="1.4"/><path d="M4 2 V0.8 H7 V2" stroke="#50607e" stroke-width="1.2" fill="none"/><path d="M1.5 3.8 H9.5 L9 11.5 H2 Z" fill="#50607e"/><path d="M4 5 V10.5 M7 5 V10.5" stroke="#d3d9e1" stroke-width="1"/></svg>
<svg class="a" style="left:413px;top:463.5px;" width="18" height="14" viewBox="0 0 18 14"><path d="M9 1 H1.5 L6 7 L1.5 13 H9" stroke="#50607e" stroke-width="2" fill="none" stroke-linejoin="round"/><path d="M10.5 9 Q10 5.5 13.5 5.5 Q17 5.5 16.8 8.5 Q16.5 11 13.5 10.5" stroke="#50607e" stroke-width="1.6" fill="none"/><path d="M9 7.5 L10.5 10 L12.5 8" stroke="#50607e" stroke-width="1.4" fill="none"/></svg>
<svg class="a" style="left:441.5px;top:460px;" width="16" height="13" viewBox="0 0 16 13"><path d="M3 3.5 H14.5 V12 H2" stroke="#50607e" stroke-width="2" fill="none"/><path d="M0.3 3.5 L4.5 0 V7Z" fill="#50607e"/></svg>
<span class="t" style="left:465.0px;top:459.00px;font-size:13.00px;color:#111111;letter-spacing:0.02px;">OpenPay Refund</span>
<svg class="a" style="left:1315px;top:465px;" width="8" height="12" viewBox="0 0 8 12"><path d="M7.5 0 V12 L0 6Z" fill="#aeb6c3"/></svg>
<svg class="a" style="left:1347.5px;top:465px;" width="8" height="12" viewBox="0 0 8 12"><path d="M0.5 0 V12 L8 6Z" fill="#50607e"/></svg>
<div class="a" style="left:1368px;top:457.2px;width:90px;height:29.5px;background:#717c91;"></div>
<span class="t" style="left:1384.6px;top:465.00px;font-size:16.00px;color:#ffffff;letter-spacing:0.11px;">Refresh</span>
<div class="a" style="left:1461px;top:457.2px;width:69px;height:29.5px;background:#c6cbd1;"></div>
<span class="t" style="left:1478.0px;top:465.00px;font-size:16.00px;color:#dfe2e5;letter-spacing:-0.29px;">Save</span>
<div class="a" style="left:332px;top:501px;width:1208px;height:30.5px;background:#717c91;"></div>
<div class="a" style="left:332px;top:501px;width:51px;height:30.5px;background:#3a4a61;"></div>
<svg class="a" style="left:353.5px;top:509.5px;" width="9" height="10" viewBox="0 0 9 10"><path d="M7 1 L2 5 L7 9" stroke="#fff" stroke-width="2.4" fill="none"/></svg>
<div class="a" style="left:383px;top:501px;width:80px;height:30px;overflow:hidden"><span class="t" style="left:-2.5px;top:9.00px;font-size:13.00px;color:#f4f5f7;letter-spacing:0.42px;-webkit-text-stroke:0.25px #f4f5f7;">Documents</span>
</div>
<span class="t" style="left:471.3px;top:510.00px;font-size:13.00px;color:#f4f5f7;letter-spacing:0.23px;-webkit-text-stroke:0.25px #f4f5f7;">Vouchers</span>
<span class="t" style="left:549.0px;top:510.00px;font-size:13.00px;color:#f4f5f7;letter-spacing:0.38px;-webkit-text-stroke:0.25px #f4f5f7;">Promotions</span>
<span class="t" style="left:640.9px;top:510.00px;font-size:13.00px;color:#f4f5f7;letter-spacing:0.14px;-webkit-text-stroke:0.25px #f4f5f7;">Promotion Engine Results</span>
<span class="t" style="left:816.0px;top:510.00px;font-size:13.00px;color:#f4f5f7;letter-spacing:0.04px;-webkit-text-stroke:0.25px #f4f5f7;">Tickets</span>
<span class="t" style="left:878.9px;top:510.00px;font-size:13.00px;color:#f4f5f7;letter-spacing:0.42px;-webkit-text-stroke:0.25px #f4f5f7;">Order history</span>
<span class="t" style="left:980.8px;top:510.00px;font-size:13.00px;color:#f4f5f7;letter-spacing:0.22px;-webkit-text-stroke:0.25px #f4f5f7;">Consignments</span>
<span class="t" style="left:1088.0px;top:510.00px;font-size:13.00px;color:#f4f5f7;letter-spacing:-0.07px;-webkit-text-stroke:0.25px #f4f5f7;">Related CronJobs</span>
<span class="t" style="left:1212.7px;top:510.00px;font-size:13.00px;color:#f4f5f7;letter-spacing:0.30px;-webkit-text-stroke:0.25px #f4f5f7;">Fraud reports</span>
<span class="t" style="left:1316.3px;top:510.00px;font-size:13.00px;color:#f4f5f7;letter-spacing:0.08px;-webkit-text-stroke:0.25px #f4f5f7;">Refunds</span>
<div class="a" style="left:1376px;top:502px;width:111px;height:30px;background:#ffffff;"></div>
<span class="t" style="left:1387.0px;top:512.00px;font-size:13.00px;color:#0a58c6;letter-spacing:0.44px;-webkit-text-stroke:0.2px #0a58c6;">Administration</span>
<div class="a" style="left:1488px;top:501px;width:52px;height:30.5px;background:#3a4a61;"></div>
<svg class="a" style="left:1510px;top:509.5px;" width="9" height="10" viewBox="0 0 9 10"><path d="M2 1 L7 5 L2 9" stroke="#fff" stroke-width="2.4" fill="none"/></svg>
<div class="a" style="left:332px;top:531px;width:1208px;height:294px;background:#ffffff;"></div>
<div class="a" style="left:1370.5px;top:496.5px;width:123px;height:42px;border:2px solid #f3806f;border-radius:3px;"></div>
<span class="t" style="left:364.2px;top:549.00px;font-size:12.00px;color:#6f7c93;letter-spacing:0.03px;">Stored Delivery Mode</span>
<div class="a" style="left:364.3px;top:564.5px;width:274px;height:29px;background:#fff;border:1px solid #c3cad5;border-radius:2px;"></div>
<div class="a" style="left:604.5px;top:565px;width:1px;height:28px;background:#c3cad5;"></div>
<svg class="a" style="left:614px;top:573px;" width="14" height="13" viewBox="0 0 14 13"><circle cx="5.6" cy="5.6" r="4.4" stroke="#2d2d2d" stroke-width="2" fill="none"/><path d="M8.8 8.8 L12.6 12.2" stroke="#2d2d2d" stroke-width="2.2" stroke-linecap="round"/></svg>
<span class="t" style="left:650.3px;top:549.00px;font-size:12.00px;color:#6f7c93;letter-spacing:0.32px;">Promotion restrictions</span>
<svg class="a" style="left:779px;top:547px;" width="14" height="12" viewBox="0 0 14 12"><circle cx="7" cy="6" r="5.8" fill="#a3abb9"/><text x="4.2" y="9.6" font-size="9" font-weight="bold" fill="#fff" font-family="Liberation Sans">?</text></svg>
<div class="a" style="left:650.3px;top:564.5px;width:273.3px;height:29px;background:#fff;border:1px solid #c3cad5;border-radius:2px;"></div>
<div class="a" style="left:889.8px;top:565px;width:1px;height:28px;background:#c3cad5;"></div>
<svg class="a" style="left:900.5px;top:573px;" width="14" height="13" viewBox="0 0 14 13"><circle cx="5.6" cy="5.6" r="4.4" stroke="#2d2d2d" stroke-width="2" fill="none"/><path d="M8.8 8.8 L12.6 12.2" stroke="#2d2d2d" stroke-width="2.2" stroke-linecap="round"/></svg>
<span class="t" style="left:936.5px;top:549.00px;font-size:12.00px;color:#6f7c93;letter-spacing:0.56px;">Subtotal</span>
<div class="a" style="left:936.5px;top:564.5px;width:274px;height:29px;background:#fff;border:1px solid #c3cad5;border-radius:2px;"></div>
<span class="t" style="left:944.0px;top:573.00px;font-size:13.00px;color:#111;letter-spacing:0.12px;">793.76</span>
<span class="t" style="left:1223.0px;top:549.00px;font-size:12.00px;color:#6f7c93;letter-spacing:0.18px;">Total Discounts</span>
<div class="a" style="left:1223px;top:564.5px;width:273.5px;height:29px;background:#fff;border:1px solid #c3cad5;border-radius:2px;"></div>
<span class="t" style="left:1229.5px;top:573.00px;font-size:13.00px;color:#111;">0</span>
<div class="a" style="left:342px;top:619px;width:1188px;height:2px;background:#dadfe6;"></div>
<span class="t" style="left:1461.8px;top:627.00px;font-size:11.50px;color:#8d8d8d;letter-spacing:-0.07px;">Copies</span>
<svg class="a" style="left:1511px;top:627px;" width="11" height="11" viewBox="0 0 11 11"><path d="M1 5.5 L5.5 1.5 L10 5.5 M1 10 L5.5 6 L10 10" stroke="#5b6c8b" stroke-width="1.9" fill="none"/></svg>
<span class="t" style="left:364.4px;top:652.00px;font-size:12.00px;color:#6f7c93;letter-spacing:0.14px;">Dependent catalog versions</span>
<div class="a" style="left:364.4px;top:667.3px;width:273.5px;height:29px;background:#f2f2f2;border:1px solid #c3cad5;border-radius:2px;"></div>
<div class="a" style="left:604.5px;top:668px;width:1px;height:28px;background:#c3cad5;"></div>
<svg class="a" style="left:614.5px;top:675.5px;" width="14" height="13" viewBox="0 0 14 13"><circle cx="5.6" cy="5.6" r="4.4" stroke="#a3a6ab" stroke-width="2" fill="none"/><path d="M8.8 8.8 L12.6 12.2" stroke="#a3a6ab" stroke-width="2.2" stroke-linecap="round"/></svg>
<span class="t" style="left:650.3px;top:652.00px;font-size:12.00px;color:#6f7c93;">Source catalog versions</span>
<div class="a" style="left:650.3px;top:667.3px;width:273.3px;height:29px;background:#f2f2f2;border:1px solid #c3cad5;border-radius:2px;"></div>
<div class="a" style="left:889.8px;top:668px;width:1px;height:28px;background:#c3cad5;"></div>
<svg class="a" style="left:900.5px;top:675.5px;" width="14" height="13" viewBox="0 0 14 13"><circle cx="5.6" cy="5.6" r="4.4" stroke="#a3a6ab" stroke-width="2" fill="none"/><path d="M8.8 8.8 L12.6 12.2" stroke="#a3a6ab" stroke-width="2.2" stroke-linecap="round"/></svg>
<div class="a" style="left:342px;top:722px;width:1188px;height:1.5px;background:#c9d0da;"></div>
<span class="t" style="left:1397.3px;top:730.00px;font-size:11.50px;color:#8d8d8d;letter-spacing:0.18px;">openpay payments</span>
<svg class="a" style="left:1511px;top:729.5px;" width="11" height="11" viewBox="0 0 11 11"><path d="M1 5.5 L5.5 1.5 L10 5.5 M1 10 L5.5 6 L10 10" stroke="#5b6c8b" stroke-width="1.9" fill="none"/></svg>
<span class="t" style="left:364.4px;top:754.00px;font-size:12.00px;color:#6f7c93;letter-spacing:-0.06px;">OpenPayPlanId</span>
<div class="a" style="left:364.4px;top:770.4px;width:273.5px;height:28.3px;background:#f3f3f3;border:1px solid #c3cad5;border-radius:2px;"></div>
<span class="t" style="left:371.5px;top:778.00px;font-size:13.00px;color:#a5a5a5;letter-spacing:0.10px;">3000000056370</span>
<span class="t" style="left:650.8px;top:754.00px;font-size:12.00px;color:#6f7c93;letter-spacing:-0.05px;">OpenPayStatus</span>
<div class="a" style="left:650.8px;top:770.4px;width:273px;height:28.3px;background:#f3f3f3;border:1px solid #c3cad5;border-radius:2px;"></div>
<div class="a" style="left:890px;top:771px;width:1px;height:27px;background:#c3cad5;"></div>
<span class="t" style="left:658.2px;top:779.00px;font-size:12.50px;color:#a5a5a5;letter-spacing:-0.41px;">OPENPAY_APPROVED</span>
<svg class="a" style="left:902.5px;top:782.5px;" width="9" height="5" viewBox="0 0 9 5"><path d="M0 0 H9 L4.5 4.5Z" fill="#8f959d"/></svg>
<div class="a" style="left:351.4px;top:749.3px;width:596.5px;height:64.5px;border:2px solid #f3897b;border-radius:3px;"></div>
</body></html>
